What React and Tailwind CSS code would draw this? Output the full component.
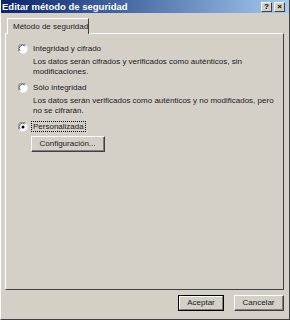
import React from 'react';

function Radio({ checked }) {
  return (
    <svg width="10" height="10" viewBox="0 0 12 12" className="shrink-0">
      <circle cx="6" cy="6" r="5.5" fill="#ffffff" />
      <path d="M1.5 9 A5 5 0 0 1 9 1.5" stroke="#808080" strokeWidth="1.2" fill="none" />
      <path d="M2.6 8.3 A4 4 0 0 1 8.3 2.6" stroke="#404040" strokeWidth="1" fill="none" />
      {checked && <circle cx="6" cy="6" r="1.8" fill="#000000" />}
    </svg>
  );
}

function Option({ label, checked, focused, children }) {
  return (
    <div className="flex flex-col">
      <div className="flex items-center gap-[3px] h-[11px]">
        <Radio checked={checked} />
        <span className={focused ? 'border border-dotted border-black px-[1px] leading-[9px]' : 'px-[2px]'}>
          {label}
        </span>
      </div>
      {children}
    </div>
  );
}

function Button({ children, primary, className = '' }) {
  return (
    <div
      className={`flex items-center justify-center h-[16px] bg-[#d4d0c8] border ${
        primary ? 'border-black' : 'border-t-white border-l-white border-r-[#404040] border-b-[#404040]'
      } ${className}`}
    >
      <div className={`flex-1 h-full flex items-center justify-center whitespace-nowrap ${primary ? 'border border-t-white border-l-white border-r-[#808080] border-b-[#808080]' : 'border-r border-b border-r-[#808080] border-b-[#808080]'}`}>
        {children}
      </div>
    </div>
  );
}

export default function App() {
  return (
    <div className="w-[290px] h-[320px] bg-[#d4d0c8] flex flex-col text-[8px] text-[#1a1a1a] border-l border-b border-l-white border-b-[#404040] border-r border-r-[#404040] overflow-hidden" style={{ fontFamily: '"Liberation Sans", Arial, sans-serif' }}>
      <div className="h-[13px] shrink-0 flex items-center justify-between pl-[1px] pr-[4px] bg-gradient-to-r from-[#0a246a] to-[#a6caf0]">
        <span className="text-white font-bold text-[9.5px] leading-none">Editar método de seguridad</span>
        <div className="flex gap-[2px]">
          <div className="w-[11px] h-[10px] bg-[#d4d0c8] border border-t-white border-l-white border-r-[#404040] border-b-[#404040] flex items-center justify-center text-[8px] font-bold leading-none text-black">?</div>
          <div className="w-[11px] h-[10px] bg-[#d4d0c8] border border-t-white border-l-white border-r-[#404040] border-b-[#404040] flex items-center justify-center text-[8px] font-bold leading-none text-black">×</div>
        </div>
      </div>

      <div className="flex-1 flex flex-col pt-[5px] pl-[4px] pr-[5px]">
        <div className="relative z-10 -mb-px ml-[2px] w-[82px] h-[16px] bg-[#d4d0c8] border-t border-l border-r border-t-white border-l-white border-r-[#404040] flex items-center pl-[5px] whitespace-nowrap">
          Método de seguridad
        </div>
        <div className="h-[257px] border border-t-white border-l-white border-r-[#404040] border-b-[#404040] flex flex-col pl-[12px] pt-[9px] gap-[5px] whitespace-nowrap">
          <Option label="Integridad y cifrado">
            <div className="pl-[15px] pt-[3px] leading-[10px]">
              Los datos serán cifrados y verificados como auténticos, sin<br />modificaciones.
            </div>
          </Option>
          <Option label="Sólo integridad">
            <div className="pl-[15px] pt-[3px] leading-[10px]">
              Los datos serán verificados como auténticos y no modificados, pero<br />no se cifrarán.
            </div>
          </Option>
          <Option label="Personalizada" checked focused>
            <div className="pl-[13px] pt-[4px]">
              <Button className="w-[74px]">Configuración...</Button>
            </div>
          </Option>
        </div>
        <div className="flex justify-end gap-[10px] pt-[5px]">
          <Button primary className="w-[46px]">Aceptar</Button>
          <Button className="w-[50px]">Cancelar</Button>
        </div>
      </div>
    </div>
  );
}
